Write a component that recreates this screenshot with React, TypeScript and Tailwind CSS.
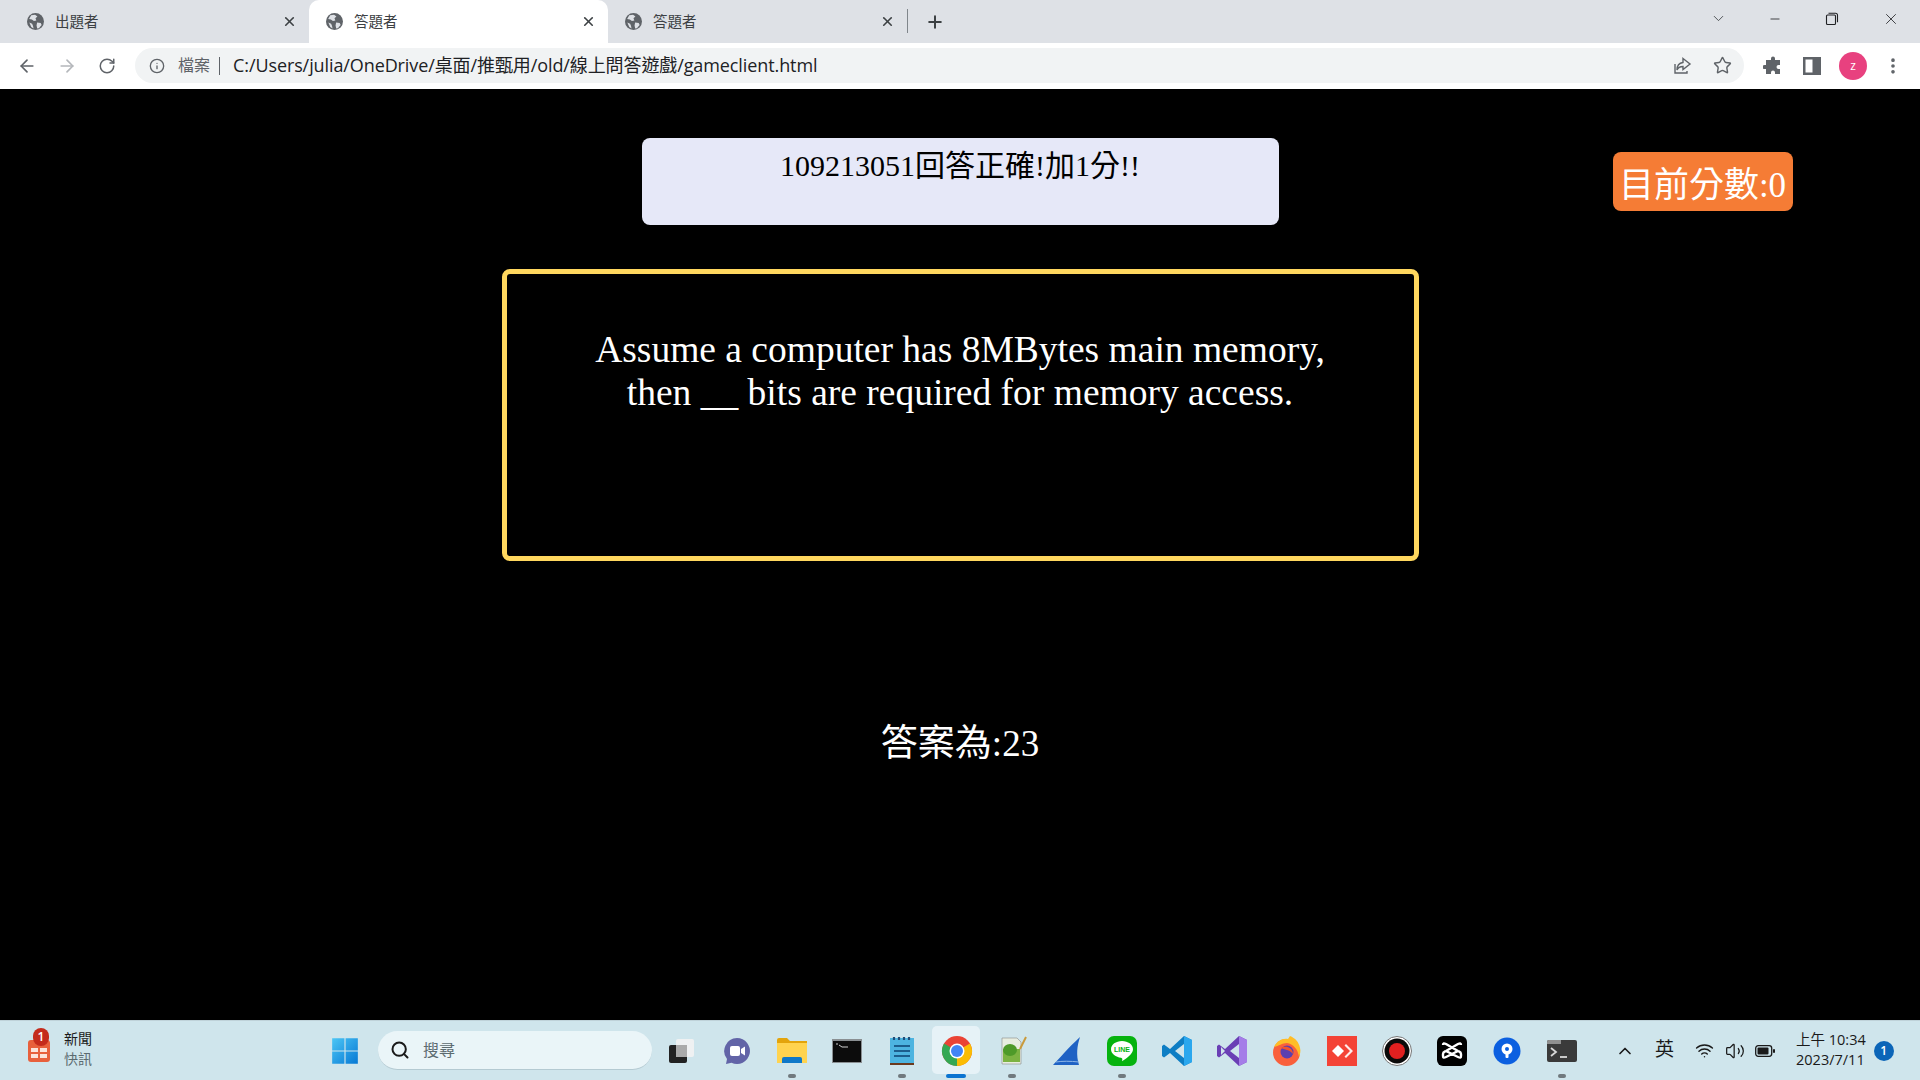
import React from "react";
import { ArrowLeft, ArrowRight, RotateCw, Info, Star, X, Plus, ChevronDown, Minus, EllipsisVertical, Search, ChevronUp, Wifi, Volume2 } from "lucide-react";

const ui = "font-['Open_Sans','Noto_Sans_CJK_TC',sans-serif]";
const page = "font-['Liberation_Serif','Noto_Sans_CJK_TC',serif]";

function Globe() {
  return (
    <svg viewBox="0 0 16 16" className="w-[17px] h-[17px] shrink-0">
      <circle cx="8" cy="8" r="8" fill="#5f6368" />
      <path d="M4 2.2 7.6 1.6 9.8 3.2 8 5 8.8 7 6.5 7.6 4.6 6 2 5.6ZM9.5 9l3.4.4.9 1.8-2.6 3.2-1.6.2-.6-2.800ZM2.200 9l2.600 1.200.8 1.800.6 2.600-2.200-1.400Z" fill="#dee1e6" />
    </svg>
  );
}

function Tab({ title, active, sep }: { title: string; active?: boolean; sep?: boolean }) {
  return (
    <div className={`relative flex items-center w-[299px] h-[43px] pl-[17px] pr-[12px] ${active ? "bg-white rounded-t-[10px]" : ""}`}>
      <Globe />
      <span className="ml-[11px] text-[14.5px] text-[#3c4043] flex-1">{title}</span>
      <X size={15} strokeWidth={2.6} className="text-[#3c4043]" />
      {sep && <div className="absolute right-[-1px] top-[9px] w-px h-[24px] bg-[#80868b]" />}
    </div>
  );
}

function Slot({ children, pip, active }: { children: React.ReactNode; pip?: boolean; active?: boolean }) {
  return (
    <div className="relative flex items-center justify-center w-[55px] h-[59px]">
      {active && <div className="absolute left-[3px] top-[5px] w-[48px] h-[48px] rounded-[5px] bg-[#e6f2f7]" />}
      <div className="relative w-[32px] h-[32px] flex items-center justify-center">{children}</div>
      {pip && <div className="absolute bottom-[2px] left-[24px] w-[8px] h-[4px] rounded-full bg-[#70797e]" />}
      {active && <div className="absolute bottom-[2px] left-[17px] w-[20px] h-[4px] rounded-full bg-[#0b74d1]" />}
    </div>
  );
}

function S({ children }: { children: React.ReactNode }) {
  return <svg viewBox="0 0 32 32" className="w-[32px] h-[32px]">{children}</svg>;
}

export default function App() {
  return (
    <div className={`w-[1920px] h-[1080px] flex flex-col bg-black overflow-hidden ${ui}`}>
      {/* tab strip */}
      <div className="h-[43px] bg-[#dee1e6] flex items-center shrink-0">
        <div className="flex w-[910px] pl-[10px]">
          <Tab title="出題者" />
          <Tab title="答題者" active />
          <Tab title="答題者" sep />
        </div>
        <Plus size={20} strokeWidth={2.4} className="text-[#3c4043] ml-[15px]" />
        <div className="flex-1" />
        <div className="flex items-center pb-[6px]">
          <ChevronDown size={17} strokeWidth={1.2} className="text-[#3c4043] mr-[41px]" />
          <Minus size={14} strokeWidth={1.4} className="text-[#202124] mr-[43px]" />
          <svg viewBox="0 0 14 14" className="w-[14px] h-[14px] mr-[43px]" fill="none" stroke="#202124" strokeWidth="1.1">
            <rect x="1.5" y="3" width="9" height="9.5" rx="1" />
            <path d="M3.5 1.2h7a2 2 0 0 1 2 2v7" />
          </svg>
          <X size={18} strokeWidth={1.1} className="text-[#202124] mr-[20px]" />
        </div>
      </div>

      {/* toolbar */}
      <div className="h-[46px] pb-[1px] bg-white flex items-center shrink-0 pl-[17px]">
        <ArrowLeft size={20} strokeWidth={2} className="text-[#5f6368]" />
        <ArrowRight size={20} strokeWidth={2} className="text-[#b4b7bb] ml-[20px]" />
        <RotateCw size={18} strokeWidth={2} className="text-[#5f6368] ml-[21px]" />
        <div className="ml-[19px] w-[1609px] h-[35px] bg-[#f1f3f4] rounded-full flex items-center pl-[14px] pr-[12px]">
          <Info size={16} strokeWidth={2} className="text-[#5f6368]" />
          <span className="ml-[13px] -mt-[1px] text-[16px] text-[#5f6368]">檔案</span>
          <span className="ml-[9px] w-px h-[18px] bg-[#5f6368]" />
          <span className="ml-[13px] text-[18px] tracking-[-0.1px] text-[#202124] flex-1">C:/Users/julia/OneDrive/桌面/推甄用/old/線上問答遊戲/gameclient.html</span>
          <svg viewBox="0 0 20 20" className="w-[20px] h-[20px]" fill="none" stroke="#5f6368" strokeWidth="1.4">
            <path d="M3 8v9h12v-2" />
            <path d="M11 2.500 18 8l-7 5.500V10.500c-3 0-5 1.200-6 3.500 0-4.500 2.500-7 6-7.500Z" />
          </svg>
          <Star size={19} strokeWidth={1.8} className="text-[#5f6368] ml-[21px]" />
        </div>
        <svg viewBox="0 0 20 20" className="w-[20px] h-[20px] ml-[19px]" fill="#5f6368">
          <path d="M8 2.500a2 2 0 0 1 4 0V4h5v5h-1.500a2 2 0 0 0 0 4H17v5h-5v-1.500a2 2 0 0 0-4 0V18H3v-5H1.500a2 2 0 0 1 0-4H3V4h5Z" />
        </svg>
        <svg viewBox="0 0 18 18" className="w-[18px] h-[18px] ml-[20px]">
          <path fillRule="evenodd" d="M0 0h18v18H0ZM2.500 2.500v13h7v-13Z" fill="#5f6368" />
        </svg>
        <div className="ml-[18px] w-[28px] h-[28px] rounded-full bg-[#e8417f] text-white text-[12px] flex items-center justify-center">z</div>
        <EllipsisVertical size={20} strokeWidth={2.4} className="text-[#5f6368] ml-[16px]" />
      </div>

      {/* page */}
      <main className={`flex-1 bg-black flex flex-col ${page}`}>
        <div className="grid grid-cols-[1fr_637px_1fr] pt-[49px]">
          <div />
          <div className="h-[87px] rounded-[8px] bg-[#e6e8f8] text-black text-[30px] leading-[36px] text-center pt-[10px]">109213051回答正確!加1分!!</div>
          <div className="pl-[334px] pt-[14px]">
            <div className="w-[180px] h-[59px] overflow-hidden rounded-[8px] bg-[#f57c35] text-white text-[35px] leading-[68px] text-center whitespace-nowrap">目前分數:0</div>
          </div>
        </div>
        <div className="self-center w-[917px] h-[292px] mt-[44px] border-[5px] border-[#ffd75e] rounded-[8px] text-white text-[37.5px] leading-[43px] text-center pt-[54px] whitespace-nowrap">
          Assume a computer has 8MBytes main memory,<br />then __ bits are required for memory access.
        </div>
        <div className="self-center mt-[161px] text-white text-[37px] leading-[43px]">答案為:23</div>
      </main>

      {/* taskbar */}
      <footer className="h-[60px] shrink-0 bg-[#cfe5ec] border-t border-[#bfd2d9] flex items-center">
        <div className="relative w-[40px] ml-[22px] h-[59px]">
          <div className="absolute left-[6px] top-[19px] w-[22px] h-[22px] rounded-[3px] bg-[#e8603c]">
            <div className="absolute left-[3px] top-[8px] w-[7px] h-[4px] bg-[#fbe3da]" />
            <div className="absolute left-[3px] top-[14px] w-[7px] h-[4px] bg-[#fbe3da]" />
            <div className="absolute left-[12px] top-[8px] w-[7px] h-[4px] bg-[#fbe3da]" />
            <div className="absolute left-[12px] top-[14px] w-[7px] h-[4px] bg-[#fbe3da]" />
          </div>
          <div className="absolute left-[11px] top-[7px] w-[16px] h-[18px] rounded-full bg-[#c42b1c] text-white text-[12px] font-semibold leading-[18px] text-center">1</div>
        </div>
        <div className="flex flex-col text-[14px] leading-[20px] ml-[2px] w-[40px] -mt-[3px]">
          <span className="text-[#1a1a1a]">新聞</span>
          <span className="text-[#5c6b70]">快訊</span>
        </div>
        <svg viewBox="0 0 24 24" className="w-[28px] h-[28px] ml-[227px]">
          <defs>
            <linearGradient id="w" x1="0" y1="0" x2="1" y2="1">
              <stop offset="0" stopColor="#4cc6f5" />
              <stop offset="1" stopColor="#0678d4" />
            </linearGradient>
          </defs>
          <path d="M1 1h10.500v10.500H1ZM12.500 1H23v10.500H12.500ZM1 12.500h10.500V23H1ZM12.500 12.500H23V23H12.500Z" fill="url(#w)" />
        </svg>
        <div className="ml-[19px] w-[274px] h-[39px] rounded-full bg-[#eaf5f8] border-b border-[#b4cad2] flex items-center pl-[12px]">
          <Search size={20} strokeWidth={2.4} className="text-[#1a1a1a]" />
          <span className="ml-[13px] text-[16px] text-[#5c6b70]">搜尋</span>
        </div>
        <div className="flex ml-[2px] h-[59px]">
          <Slot><S><rect x="3" y="10" width="18" height="18" rx="2" fill="#222" /><rect x="10" y="4" width="18" height="18" rx="2" fill="#f2f2f2" opacity=".92" /><rect x="10" y="10" width="11" height="12" fill="#aaa" /></S></Slot>
          <Slot><S><path d="M16 3a13 13 0 1 1-5.500 24.800L5 29l1-5A13 13 0 0 1 16 3Z" fill="#6264a7" /><rect x="9" y="11" width="10" height="10" rx="2" fill="#fff" /><path d="M20 14l4-2.500v9L20 18Z" fill="#fff" /></S></Slot>
          <Slot pip><S><path d="M1 5a2 2 0 0 1 2-2h8l3 3h17v5H1Z" fill="#e3a40c" /><path d="M1 8h30v20H1Z" fill="#ffd34f" /><path d="M6 28v-4a2 2 0 0 1 2-2h16a2 2 0 0 1 2 2v4Z" fill="#0f78c8" /></S></Slot>
          <Slot><S><rect x="1" y="4" width="30" height="24" fill="#8a8f92" /><rect x="2" y="6" width="28" height="21" fill="#0c0c0c" /><path d="M5 9h2M8 10l3 2h6" stroke="#cfcfcf" strokeWidth="1" fill="none" /></S></Slot>
          <Slot pip><S><path d="M4 3h24v25H4Z" fill="#4db4e0" /><path d="M4 28h24v2H4Z" fill="#6b3a1e" /><path d="M8 2v3M13 2v3M18 2v3M23 2v3" stroke="#1f4e79" strokeWidth="2.200" /><path d="M8 11h16M8 16h16M8 21h16" stroke="#1c5e8c" strokeWidth="2" /></S></Slot>
          <Slot active><S>
            <circle cx="16" cy="16" r="15" fill="#ea4335" />
            <path d="M16 16 29 8.500A15 15 0 0 1 16 31Z" fill="#fbbc04" />
            <path d="M16 16 16 31A15 15 0 0 1 3 8.500Z" fill="#34a853" />
            <circle cx="16" cy="16" r="7.500" fill="#fff" />
            <circle cx="16" cy="16" r="6" fill="#4285f4" />
          </S></Slot>
          <Slot pip><S><path d="M6 3h15l4 4v22H6Z" fill="#e8eee0" stroke="#888" strokeWidth=".6" /><path d="M7 14h17v13H7Z" fill="#7cb342" /><ellipse cx="14" cy="15" rx="7" ry="6" fill="#4e9a29" /><path d="M24 14 30 2" stroke="#c99a3c" strokeWidth="2" /></S></Slot>
          <Slot><S><path d="M2 30C8 24 16 14 29 2c-3 9-4 18-1 28Z" fill="#1f62c4" /><path d="M5 27c6-1 14-1 23 0" stroke="#8db6e8" strokeWidth="1" fill="none" /></S></Slot>
          <Slot pip><S><rect x="1" y="1" width="30" height="30" rx="7" fill="#06b30f" /><path d="M16 6c6 0 11 3.600 11 8.200 0 4.500-6 9-11 12 .6-2 .5-3.200-1-3.500C10 22 5 19 5 14.200 5 9.600 10 6 16 6Z" fill="#fff" /><text x="16" y="17" textAnchor="middle" fontSize="7" fontWeight="700" fill="#06b30f" fontFamily="Liberation Sans">LINE</text></S></Slot>
          <Slot><S><path d="M23 1 31 5v22l-8 4-14-13-6 4.500-2-1.500v-10l2-1.500 6 4.500Z" fill="#0e7ec4" /><path d="M23 1 31 5v22l-8 4Z" fill="#2aa7ee" /><path d="M23 9v14l-9-7Z" fill="#cfe5ec" /></S></Slot>
          <Slot><S><path d="M23 1 31 5v22l-8 4-14-13-6 4.500-2-1.500v-10l2-1.500 6 4.500Z" fill="#6a3fb5" /><path d="M23 1 31 5v22l-8 4Z" fill="#a57de8" /><path d="M23 9v14l-9-7Z" fill="#cfe5ec" /><path d="M5 12v8l4-4Z" fill="#cfe5ec" /></S></Slot>
          <Slot><S><circle cx="15.500" cy="17.500" r="13.500" fill="#f9603c" /><path d="M3 12C6 6 11 3 17 4l2-3c5 2 9 6 10 12 1 3 0 6-1 9-1-8-6-13-12-14-5 0-8 3-13 4Z" fill="#ffbd27" /><circle cx="16" cy="17" r="6.500" fill="#5a3fb0" /><path d="M10 13c4-3 12-1 12 6-3-4-7-4-12-6Z" fill="#f2552c" /></S></Slot>
          <Slot><S><rect x="1" y="1" width="30" height="30" fill="#f44336" /><path d="M12 10l6 6-6 6-6-6Z" fill="#fff" /><path d="M20 9l7 7-7 7-1.500-1.500L24 16l-5.500-5.500Z" fill="#fff" opacity=".9" /></S></Slot>
          <Slot><S><circle cx="16" cy="16" r="14.500" fill="#fff" stroke="#777" strokeWidth="1" /><circle cx="16" cy="16" r="12.500" fill="#0a0a0a" /><circle cx="16" cy="16" r="8" fill="#e02020" /></S></Slot>
          <Slot><S><rect x="1" y="1" width="30" height="30" rx="6" fill="#000" /><path d="M7 10c0-2 1-2 3-1l12 7c2 1 3 1 3 3v2c0 2-1 2-3 1l-12-6M25 10c0-2-1-2-3-1l-12 7c-2 1-3 1-3 3v2c0 2 1 2 3 1l12-6" fill="none" stroke="#fff" strokeWidth="2.400" strokeLinejoin="round" /></S></Slot>
          <Slot><S><circle cx="16" cy="16" r="13.500" fill="#0b5fe0" /><circle cx="16" cy="14" r="5.500" fill="#fff" /><circle cx="16" cy="14" r="2" fill="#0b5fe0" /><rect x="14.500" y="18" width="3" height="5" rx="1" fill="#fff" /></S></Slot>
          <Slot pip><S><rect x="1" y="5" width="30" height="22" rx="2" fill="#3a3a3a" /><path d="M1 7a2 2 0 0 1 2-2h12v4H1Z" fill="#8f8f8f" /><path d="M5 13l5 4-5 4" stroke="#d8d8d8" strokeWidth="1.800" fill="none" /><path d="M14 22h7" stroke="#d8d8d8" strokeWidth="1.800" /></S></Slot>
        </div>
        <ChevronUp size={20} strokeWidth={2} className="text-[#1a1a1a] ml-[26px]" />
        <span className="ml-[20px] -mt-[2px] text-[19px] text-[#1a1a1a]">英</span>
        <Wifi size={19} strokeWidth={1.8} className="text-[#1a1a1a] ml-[21px]" />
        <Volume2 size={20} strokeWidth={1.5} className="text-[#1a1a1a] ml-[11px]" />
        <svg viewBox="0 0 20 12" className="w-[20px] h-[12px] ml-[10px]">
          <rect x=".7" y=".7" width="16" height="10.600" rx="2.500" fill="none" stroke="#1a1a1a" strokeWidth="1.300" />
          <rect x="2.500" y="2.500" width="11" height="7" rx="1" fill="#1a1a1a" />
          <rect x="18" y="4" width="2" height="4" rx="1" fill="#1a1a1a" />
        </svg>
        <div className="ml-[21px] flex flex-col text-[14.5px] leading-[20px] text-[#1a1a1a] whitespace-nowrap -mt-[2px]">
          <span>上午 10:34</span>
          <span>2023/7/11</span>
        </div>
        <div className="ml-[8px] w-[20px] h-[20px] rounded-full bg-[#0b65b8] text-white text-[12px] font-semibold leading-[20px] text-center">1</div>
      </footer>
    </div>
  );
}
